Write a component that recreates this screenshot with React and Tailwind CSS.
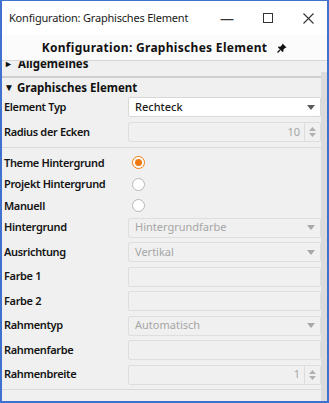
import React from "react";

const font = { fontFamily: '"Noto Sans", "Open Sans", sans-serif' };

const Arrow = ({ dim }) => (
  <svg width="8" height="5" viewBox="0 0 8 5" className="shrink-0">
    <path d="M0 0 H8 L4 5 Z" fill={dim ? "#a8a8a8" : "#5a5a5a"} />
  </svg>
);

const Spinner = () => (
  <div className="flex h-full w-[16px] flex-col items-center justify-center gap-[2px] border-l border-[#dcdcdc]">
    <svg width="7" height="4" viewBox="0 0 7 4">
      <path d="M0 4 L3.5 0 L7 4 Z" fill="#b0b0b0" />
    </svg>
    <svg width="7" height="4" viewBox="0 0 7 4">
      <path d="M0 0 H7 L3.5 4 Z" fill="#b0b0b0" />
    </svg>
  </div>
);

const Row = ({ label, children }) => (
  <div className="flex h-[20px] items-center">
    <div className="w-[126px] shrink-0 pl-[2px] text-[11px] font-semibold tracking-[-0.35px] text-[#141414]">{label}</div>
    <div className="h-full flex-1">{children}</div>
  </div>
);

const Select = ({ value, dim }) => (
  <div
    className={
      "flex h-full items-center justify-between rounded-[2px] border pl-[6px] pr-[5px] text-[11px] " +
      (dim ? "border-[#dedede] bg-[#f0f0f0] text-[#a6a6a6]" : "border-[#d8d8d8] bg-white font-medium text-[#1b1b1b]")
    }
  >
    <span>{value}</span>
    <Arrow dim={dim} />
  </div>
);

const Empty = () => <div className="h-full rounded-[2px] border border-[#dedede] bg-[#f0f0f0]" />;

const Num = ({ value }) => (
  <div className="flex h-full items-center rounded-[2px] border border-[#dedede] bg-[#f0f0f0] text-[11px] text-[#a6a6a6]">
    <span className="flex-1 pr-[4px] text-right">{value}</span>
    <Spinner />
  </div>
);

const Radio = ({ on }) => (
  <div
    className={
      "flex h-[13px] w-[13px] items-center justify-center rounded-full border bg-white " +
      (on ? "border-[#f07a10]" : "border-[#b8b8b8]")
    }
  >
    {on && <div className="h-[7px] w-[7px] rounded-full bg-[#f07a10]" />}
  </div>
);

const RadioRow = ({ label, on }) => (
  <div className="flex h-[21.5px] items-center">
    <div className="w-[130px] shrink-0 pl-[2px] text-[11px] font-semibold tracking-[-0.35px] text-[#141414]">{label}</div>
    <Radio on={on} />
  </div>
);

export default function App() {
  return (
    <div style={font} className="flex h-[403px] w-[329px] flex-col border-2 border-t-[1px] border-[#3f72cf] bg-[#f0f0f0]">
      {/* window title bar */}
      <div className="flex h-[34px] shrink-0 items-center bg-white pl-[7px] text-[11px] text-[#1b1b1b]">
        <span className="flex-1 whitespace-nowrap tracking-[-0.2px]">Konfiguration: Graphisches Element</span>
        <div className="flex items-center">
          <span className="w-[40px] text-center text-[14px] text-[#333]">—</span>
          <span className="flex w-[42px] justify-center">
            <span className="h-[10px] w-[10px] border border-[#333]" />
          </span>
          <span className="w-[38px] text-center">
            <svg width="11" height="11" viewBox="0 0 11 11" className="inline">
              <path d="M0.5 0.5 L10.5 10.5 M10.5 0.5 L0.5 10.5" stroke="#333" strokeWidth="1.1" />
            </svg>
          </span>
        </div>
      </div>

      {/* panel header */}
      <div className="flex h-[26px] shrink-0 items-center justify-center gap-[10px] border-b border-[#d6d6d6] bg-[#fbfbfb] text-[12px] font-bold text-[#111]">
        <span className="whitespace-nowrap tracking-[0.3px]">Konfiguration: Graphisches Element</span>
        <svg width="10" height="10" viewBox="0 0 10 10">
          <path d="M5.5 0.5 L9.5 4.5 L8 5 L6.3 6.7 L6.5 8.5 L5.5 9 L1 4.5 L1.5 3.5 L3.3 3.7 L5 2 Z" fill="#111" />
          <path d="M3 7 L0.5 9.5" stroke="#111" strokeWidth="1.2" />
        </svg>
      </div>

      {/* scroll area */}
      <div className="flex min-h-0 flex-1 overflow-hidden">
        <div className="min-w-0 flex-1 overflow-hidden">
          <div className="-mt-[9px] flex h-[26px] items-center border-b-2 border-[#cfcfcf] pl-[2px] text-[11.5px] font-bold text-[#111]">
            <span className="mr-[5px] text-[9px]">►</span>Allgemeines
          </div>
          <div className="flex h-[19px] items-center pl-[2px] text-[11.5px] font-bold text-[#111]">
            <span className="mr-[3px] text-[10px]">▼</span>Graphisches Element
          </div>
          <div className="flex flex-col gap-[5px]">
            <Row label="Element Typ">
              <Select value="Rechteck" />
            </Row>
            <Row label="Radius der Ecken">
              <Num value="10" />
            </Row>
          </div>
          <div className="mt-[5px] border-t border-[#dadada]" />
          <div className="mt-[4px] flex flex-col">
            <RadioRow label="Theme Hintergrund" on />
            <RadioRow label="Projekt Hintergrund" />
            <RadioRow label="Manuell" />
          </div>
          <div className="mt-[1px] flex flex-col gap-[4.5px]">
            <Row label="Hintergrund">
              <Select value="Hintergrundfarbe" dim />
            </Row>
            <Row label="Ausrichtung">
              <Select value="Vertikal" dim />
            </Row>
            <Row label="Farbe 1">
              <Empty />
            </Row>
            <Row label="Farbe 2">
              <Empty />
            </Row>
            <Row label="Rahmentyp">
              <Select value="Automatisch" dim />
            </Row>
            <Row label="Rahmenfarbe">
              <Empty />
            </Row>
            <Row label="Rahmenbreite">
              <Num value="1" />
            </Row>
          </div>
          <div className="mt-[4px] border-t border-[#dadada]" />
        </div>
        <div className="mt-[11px] w-[6px] shrink-0 bg-[#dcdcdc]" />
      </div>
    </div>
  );
}
